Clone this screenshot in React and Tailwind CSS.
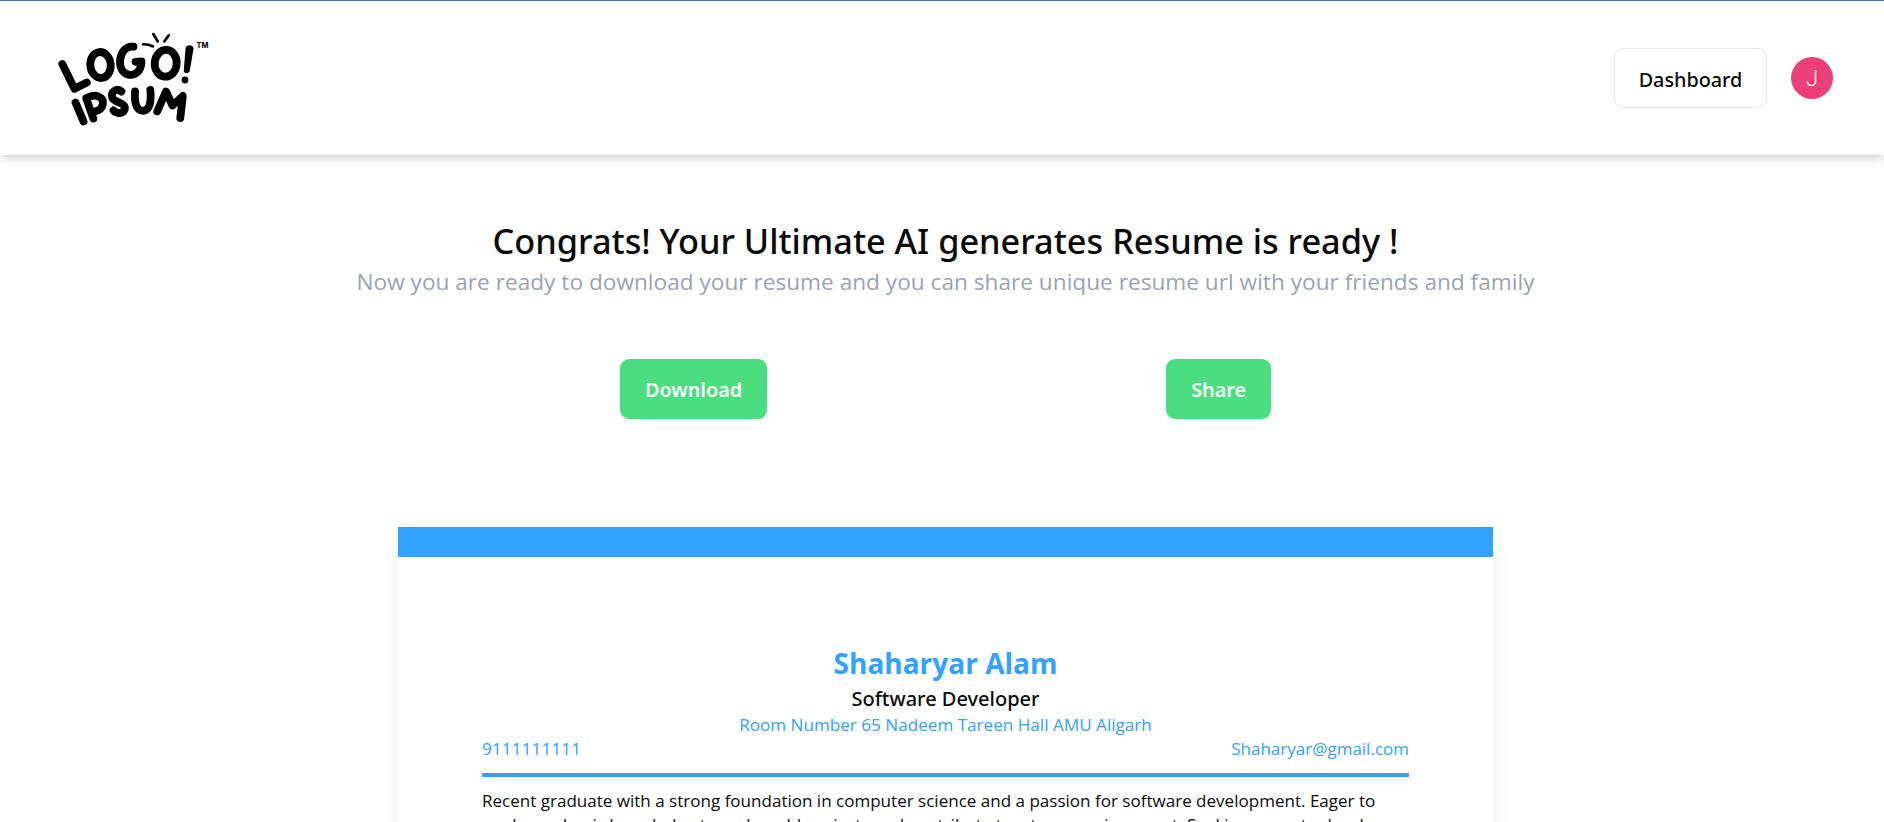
function Logo() {
  return (
    <svg
      width="152"
      height="98"
      viewBox="58 28 152 98"
      fill="none"
      stroke="#000"
      strokeLinecap="round"
      strokeLinejoin="round"
      aria-label="Logo Ipsum"
    >
      <g strokeWidth="7.8">
        <path d="M62.300 63 L74.500 87.800 L86.800 81.500" />
        <ellipse cx="100.500" cy="64" rx="10.200" ry="13" transform="rotate(-6 100.500 64)" />
        <path d="M133.500 45.700 C126 44.500 121 51 120 59.500 C119.500 69 125 74.500 131.500 73.800 C138 73 141.500 67.500 141.500 60.300 L135.500 60.800" />
        <ellipse cx="165.700" cy="62.300" rx="11" ry="13.400" transform="rotate(5 165.700 62.300)" />
        <path d="M75.500 101.500 L83.500 120.500" />
        <path d="M86.500 98 L93.300 117.500" />
        <path d="M86.500 97 C96 92 104 96 102.800 103 C101.700 109.500 95.500 111 91.500 110.500" />
        <path d="M121.500 90.500 C117 86.500 110.500 90.500 112.200 96.500 C113.800 101.500 124.500 101 125 107 C125 112.500 117 113.500 113.500 109.500" />
        <path d="M135 90.500 C134.500 99 135 109.500 143 109.800 C150.500 109.500 151.300 99 150.300 89" />
        <path d="M157.200 110.500 L166 90.500 L172.500 104.500 L182.800 95 L180.300 117" />
      </g>
      <path d="M185.500 47.500 C186 43 194 43.500 193.500 48 L189.800 69.500 C189 73.500 183.500 73 183.800 69 Z" fill="#000" stroke="none" />
      <circle cx="185" cy="79" r="3.400" fill="#000" stroke="none" />
      <g strokeWidth="2.600">
        <path d="M143 43.300 C146 43 149.500 43.800 153 45.500" />
        <path d="M153.300 33 L157.800 40.500" />
        <path d="M168.800 34.300 L164.300 40.500" />
      </g>
      <text
        x="196.600"
        y="47"
        fill="#000"
        stroke="none"
        className="font-['Inter',sans-serif] text-[7.500px] font-bold"
      >
        TM
      </text>
    </svg>
  );
}

function Header() {
  return (
    <header className="flex h-[155px] items-center justify-between border-t border-[#4a78b0] pr-[51px] pl-[58px] shadow-[0_6px_9px_-1px_rgba(0,0,0,0.1),0_3px_6px_-2px_rgba(0,0,0,0.1)]">
      <Logo />
      <div className="flex items-center gap-6">
        <button className="h-[60px] w-[153px] rounded-[9px] border border-[#e5e5e5] pt-[3px] font-['Noto_Sans',sans-serif] text-[19.8px] font-medium">
          Dashboard
        </button>
        <div className="flex size-[42px] items-center justify-center rounded-full bg-[#ec407a] font-['Roboto',sans-serif] text-[22px] font-light text-white">
          J
        </div>
      </div>
    </header>
  );
}

function ActionButton({ children }) {
  return (
    <button className="h-[60px] rounded-[9px] bg-[#4ade80] px-[25px] pt-[2px] font-['Noto_Sans',sans-serif] text-[19.8px] font-semibold text-[#fafafa]">
      {children}
    </button>
  );
}

function Resume() {
  return (
    <article className="mt-[108px] h-[1200px] w-[1095px] border-t-[30px] border-[#33a1ff] bg-white p-[84px] shadow-[0_15px_22px_-4px_rgba(0,0,0,0.1)]">
      <div className="text-center">
        <h2 className="text-[28px] leading-[44px] font-bold text-[#33a1ff]">Shaharyar Alam</h2>
        <h3 className="font-['Noto_Sans',sans-serif] text-[20px] leading-[28px] font-medium">Software Developer</h3>
        <p className="text-[17.13px] leading-[24px] text-[#33a1ff]">
          Room Number 65 Nadeem Tareen Hall AMU Aligarh
        </p>
      </div>
      <div className="flex justify-between text-[17px] leading-[24px] text-[#33a1ff]">
        <span className="tracking-[0.2px]">9111111111</span>
        <span>Shaharyar@gmail.com</span>
      </div>
      <hr className="my-3 border-t-4 border-[#33a1ff]" />
      <p className="text-[17.04px] leading-[24px]">
        Recent graduate with a strong foundation in computer science and a passion for software development. Eager to
        <br />
        apply academic knowledge to real-world projects and contribute to a team environment. Seeking areas to develop
      </p>
    </article>
  );
}

export default function App() {
  return (
    <div className="h-[822px] overflow-hidden bg-white font-['Open_Sans',sans-serif] text-[#0a0a0a]">
      <Header />
      <main className="flex flex-col items-center pl-[7px]">
        <h1 className="mt-[63px] font-['Noto_Sans',sans-serif] text-[34.3px] leading-[45px] font-medium whitespace-nowrap">
          Congrats! Your Ultimate AI generates Resume is ready !
        </h1>
        <p className="mt-px text-[22.65px] leading-[36px] whitespace-nowrap text-[#9ca3af]">
          Now you are ready to download your resume and you can share unique resume url with your friends and family
        </p>
        <div className="mt-[59px] flex w-[651px] justify-between">
          <ActionButton>Download</ActionButton>
          <ActionButton>Share</ActionButton>
        </div>
        <Resume />
      </main>
    </div>
  );
}
